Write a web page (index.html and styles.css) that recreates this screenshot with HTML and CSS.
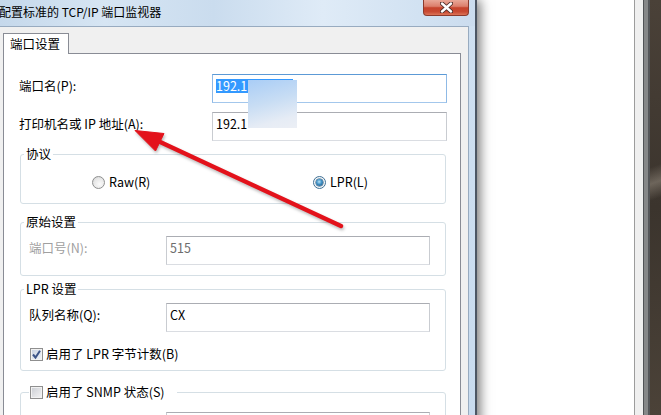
FILE: index.html
```html
<!DOCTYPE html>
<html lang="zh-CN">
<head>
<meta charset="utf-8">
<title>配置标准的 TCP/IP 端口监视器</title>
<link rel="stylesheet" href="styles.css">
</head>
<body>
<div class="dialog">
  <div class="titlebar">
    <div class="title">配置标准的 TCP/IP 端口监视器</div>
    <div class="close">
      <svg width="13" height="11" viewBox="0 0 13 11">
        <path d="M2 1.5 L11 9.5 M11 1.5 L2 9.5" stroke="#4a2a26" stroke-width="4.2" stroke-linecap="round"/>
        <path d="M2 1.5 L11 9.5 M11 1.5 L2 9.5" stroke="#ffffff" stroke-width="2.4" stroke-linecap="round"/>
      </svg>
    </div>
  </div>
  <div class="frame-body">
    <div class="client">
      <div class="tabs"><div class="tab">端口设置</div></div>
      <div class="panel">
        <div class="row first">
          <div class="label">端口名(P):</div>
          <div class="edit wide focus"><span class="sel">192.1<span class="selpad"></span></span></div>
        </div>
        <div class="row second">
          <div class="label">打印机名或 IP 地址(A):</div>
          <div class="edit wide">192.1</div>
        </div>

        <fieldset class="group g-proto">
          <legend>协议</legend>
          <div class="radios">
            <div class="opt"><span class="radio"></span><span>Raw(R)</span></div>
            <div class="opt"><span class="radio on"></span><span>LPR(L)</span></div>
          </div>
        </fieldset>

        <fieldset class="group g-raw">
          <legend>原始设置</legend>
          <div class="grow">
            <div class="glabel disabled">端口号(N):</div>
            <div class="edit narrow dis">515</div>
          </div>
        </fieldset>

        <fieldset class="group g-lpr">
          <legend>LPR 设置</legend>
          <div class="grow">
            <div class="glabel">队列名称(Q):</div>
            <div class="edit narrow">CX</div>
          </div>
          <div class="check-row">
            <span class="checkbox on"><svg width="11" height="11" viewBox="0 0 11 11"><path d="M2 5.5 L4.5 8.5 L9 1.8" fill="none" stroke="#3c5488" stroke-width="2"/></svg></span>
            <span>启用了 LPR 字节计数(B)</span>
          </div>
        </fieldset>

        <fieldset class="group g-snmp">
          <legend class="check-legend"><span class="checkbox"></span><span>启用了 SNMP 状态(S)</span></legend>
          <div class="grow">
            <div class="glabel disabled"></div>
            <div class="edit narrow dis"></div>
          </div>
        </fieldset>
      </div>
    </div>
    <div class="frame-right"></div>
  </div>
</div>
<div class="desk-gap"></div>
<div class="rside">
  <div class="r1"></div><div class="r2"></div><div class="r3"></div><div class="r4"></div><div class="r5"></div><div class="r6"></div>
</div>

<div class="privacy"></div>

<svg class="arrow" width="661" height="415" viewBox="0 0 661 415">
  <line x1="158" y1="141" x2="341" y2="226" stroke="#e3121b" stroke-width="4.4" stroke-linecap="round"/>
  <polygon points="135,130.5 164,133.5 155.5,151" fill="#e3121b" stroke="#e3121b" stroke-width="1" stroke-linejoin="round"/>
</svg>
</body>
</html>
```

FILE: styles.css
```css
html, body {
  margin: 0;
  padding: 0;
}

body {
  width: 661px;
  height: 415px;
  overflow: hidden;
  display: flex;
  position: relative;
  background: #ffffff;
  font-family: "Noto Sans CJK SC", "Noto Sans", sans-serif;
  font-size: 12.5px;
  color: #000;
}

.dialog {
  flex: none;
  width: 475px;
  height: 520px;
  display: flex;
  flex-direction: column;
  border-right: 2px solid #4c5663;
  background: linear-gradient(to bottom, #cfe0f1, #c6daee);
  box-shadow: 3px 0 11px rgba(0, 0, 0, 0.55);
}

.titlebar {
  height: 26px;
  display: flex;
  justify-content: space-between;
  align-items: flex-start;
  background: linear-gradient(to right, #c5d8eb 0%, #d6e5f3 22%, #cadcee 45%, #dfebf7 68%, #d2e2f2 88%, #cbdcee 100%);
}

.title {
  margin-left: -1px;
  font-size: 12px;
  line-height: 23px;
  color: #000;
  white-space: nowrap;
}

.close {
  width: 44px;
  height: 15px;
  margin-right: 6px;
  border: 1px solid #8c3a2c;
  border-top: none;
  border-radius: 0 0 4px 4px;
  background: linear-gradient(to bottom, #e9a898 0%, #dc7f6c 42%, #c6432c 52%, #c84a33 78%, #dc7458 100%);
  display: flex;
  align-items: center;
  justify-content: center;
}

.close svg {
  display: block;
}

.frame-body {
  flex: 1;
  display: flex;
}

.client {
  width: 461px;
  padding: 6px 7px 0 0;
  background: #f0f0f0;
  border-top: 1px solid #98abc0;
  border-right: 1px solid #98abc0;
}

.frame-right {
  flex: 1;
}

.tabs {
  display: flex;
  padding-left: 3px;
}

.tab {
  position: relative;
  z-index: 1;
  height: 20px;
  padding: 0 8px 0 6px;
  line-height: 19px;
  background: #fff;
  border: 1px solid #898c95;
  border-bottom: none;
  margin-bottom: -1px;
  white-space: nowrap;
}

.panel {
  margin-left: 3px;
  height: 420px;
  background: #fff;
  border: 1px solid #898c95;
  padding: 0 13px 0 15px;
}

.row {
  display: flex;
  align-items: flex-start;
}

.row.first {
  margin-top: 20px;
}

.row.second {
  margin-top: 9px;
}

.label {
  width: 193px;
  flex: none;
  padding-top: 4px;
  line-height: 16px;
  white-space: nowrap;
}

.edit {
  box-sizing: border-box;
  height: 29px;
  padding: 3px 0 0 3px;
  line-height: 16px;
  background: #fff;
  border: 1px solid;
  border-color: #abadb3 #c9ccd1 #dadde2 #c9ccd1;
  white-space: nowrap;
  overflow: hidden;
}

.edit.wide {
  width: 235px;
}

.edit.narrow {
  width: 264px;
}

.edit.focus {
  border-color: #5c9ad6 #8fbae6 #a3c7ec #8fbae6;
}

.edit.dis {
  color: #6d6d6d;
}

.sel {
  display: inline-block;
  background: #3399ff;
  color: #fff;
  line-height: 14px;
}

.selpad {
  display: inline-block;
  width: 46px;
}

.group {
  margin: 5px 1px 0 1px;
  border: 1px solid #d5dfe5;
  border-radius: 3px;
  min-width: 0;
  padding: 0;
}

.group legend {
  padding: 0 2px;
  margin-left: 3px;
  line-height: 16px;
  white-space: nowrap;
}

.g-proto {
  padding: 12px 0 13px 0;
}

.radios {
  display: grid;
  grid-template-columns: 221px auto;
  padding-left: 71px;
}

.opt {
  display: flex;
  align-items: center;
  gap: 4px;
  line-height: 16px;
}

.radio {
  box-sizing: border-box;
  width: 13px;
  height: 13px;
  border-radius: 50%;
  border: 1px solid #8e8f8f;
  background: radial-gradient(circle at 60% 65%, #fbfbfb 0%, #e8e8e8 55%, #d2d2d2 100%);
  display: flex;
  align-items: center;
  justify-content: center;
}

.radio.on {
  border-color: #3f6f93;
  background: radial-gradient(circle, #ffffff 0%, #eef4f9 100%);
}

.radio.on::after {
  content: "";
  width: 7px;
  height: 7px;
  border-radius: 50%;
  background: radial-gradient(circle at 45% 40%, #b7e2f4 0%, #3d8ec4 45%, #1c4d73 100%);
  box-shadow: 0 0 0 0.5px #1f4a6b;
}

.g-raw {
  margin-top: 10px;
  padding: 6px 0 10px 0;
}

.grow {
  display: flex;
  align-items: flex-start;
}

.glabel {
  width: 137px;
  flex: none;
  padding-left: 8px;
  padding-top: 4px;
  line-height: 16px;
  white-space: nowrap;
}

.disabled {
  color: #a0a0a0;
}

.g-lpr {
  margin-top: 5px;
  padding: 6px 0 8px 0;
}

.check-row {
  display: flex;
  align-items: center;
  gap: 3px;
  margin-top: 14px;
  padding-left: 9px;
  line-height: 16px;
}

.checkbox {
  box-sizing: border-box;
  width: 13px;
  height: 13px;
  flex: none;
  border: 1px solid #8f8f8f;
  background: linear-gradient(135deg, #c9ccd2 0%, #e2e3e6 55%, #f4f4f5 100%);
  box-shadow: inset 0 0 0 1px #f2f2f2;
  display: flex;
  align-items: center;
  justify-content: center;
}

.checkbox.on {
  background: linear-gradient(135deg, #c7d0e0 0%, #dfe5ee 55%, #f1f4f8 100%);
}

.checkbox svg {
  display: block;
}

.g-snmp {
  margin-top: 13px;
  padding: 12px 0 10px 0;
}

.group .check-legend {
  display: flex;
  align-items: center;
  gap: 3px;
  margin-left: 8px;
  padding: 0 12px 0 1px;
}

.desk-gap {
  flex: 1;
}

.rside {
  flex: none;
  width: 27px;
  display: flex;
}

.r1 { width: 1px; background: #9c9c9c; }
.r2 { width: 8px; background: #efefef; }
.r3 { width: 1px; background: #505356; }
.r4 { width: 4px; background: #868889; }
.r5 { width: 2px; background: #55575a; }
.r6 {
  flex: 1;
  background:
    linear-gradient(160deg, transparent 40%, rgba(200, 190, 175, 0.35) 44%, transparent 48%),
    linear-gradient(to bottom, #4a4138, #3b342d 50%, #4b4238);
}

.privacy {
  position: absolute;
  left: 248px;
  top: 80px;
  width: 49px;
  height: 48px;
  background: linear-gradient(165deg, #a9cdf6 0%, #c8ddf4 45%, #e6ecf5 80%, #eceff5 100%);
}

.arrow {
  position: absolute;
  left: 0;
  top: 0;
  pointer-events: none;
  filter: drop-shadow(1px 2px 1.5px rgba(0, 0, 0, 0.28));
}
```
